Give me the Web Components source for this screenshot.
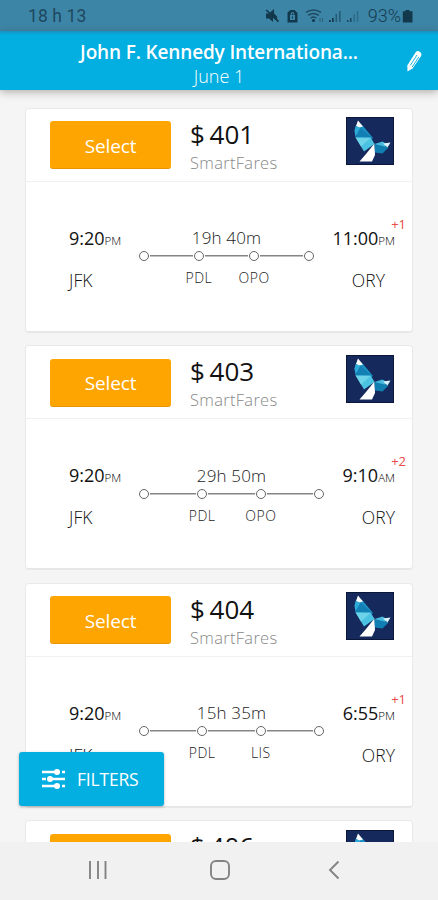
<!DOCTYPE html>
<html lang="en">
<head>
<meta charset="utf-8">
<title>Flights</title>
<style>
html,body{margin:0;height:100%;overflow:hidden;background:#f5f5f5}
body{font-family:"Open Sans","Noto Sans",sans-serif;color:#222}
</style>
</head>
<body>
<flight-app></flight-app>
<script>
const define = (name, html, setup) => {
  const t = document.createElement('template');
  t.innerHTML = html;
  customElements.define(name, class extends HTMLElement {
    connectedCallback() {
      if (this.shadowRoot) return;
      const root = this.attachShadow({mode: 'open'});
      root.append(t.content.cloneNode(true));
      if (setup) setup(this, root);
    }
  });
};

define('status-bar', `
<style>
:host{display:flex;align-items:center;height:31px;box-sizing:border-box;padding:1px 25px 0 28px;background:#3d85a6;color:#1d4860;font:400 17.5px/30px Roboto,sans-serif}
.time{flex:1;letter-spacing:.1px}
svg{display:block;flex:none}
.pct{margin-left:5px;font-size:18px;font-weight:300;color:#143c52}
</style>
<span class="time">18 h 13</span>
<svg width="98" height="20" viewBox="0 0 98 20" fill="#12384c">
  <path d="M1 7.5h3L9 3v4.2l3.2 3.5V15L8 11.6V16L4 12.5H1z"/>
  <path d="M1.2 4l12.3 11.6" stroke="#12384c" stroke-width="1.7"/>
  <path fill-rule="evenodd" d="M25.5 4h4l3 3v9.5h-10V6.500zM25 9v5h5V9h-.7V7.8a1.8 1.8 0 0 0-3.6 0V9zm1.800 0V8a.8.8 0 0 1 1.600 0v1zM27 10.500h1v2h-1z"/>
  <g fill="none" stroke="#1d4a60" stroke-width="1.5"><path d="M41 6.400q7.500-5 15 0M43.200 9.400q5.300-4 10.600 0M45.700 12.200q2.800-2.400 5.600 0"/></g>
  <circle cx="48.500" cy="14.500" r="1.500"/>
  <path d="M55 12v4M57.500 12v4" stroke="#2a5a70" stroke-width=".9"/>
  <path d="M64 14h1.700v2H64zm3-2h1.700v4H67z"/>
  <path opacity=".55" d="M70.500 8h1.600v8h-1.600zm3.500-3h1.600v11H74z"/>
  <path opacity=".85" d="M82 14h1.500v2H82zm3-2h1.500v4H85z"/>
  <path opacity=".35" d="M88.500 8H90v8h-1.500zm3.300-3h1.500v11h-1.500z"/>
</svg>
<span class="pct">93%</span>
<svg width="11" height="16" viewBox="0 0 11 16" style="margin-left:1px"><path fill="#12384c" d="M3.500 2h4v1.200H10.500V14.500H.8V3.200h2.700z"/></svg>
`);

define('trip-header', `
<style>
:host{display:block;position:relative;z-index:2;height:59px;background:#03aee0;color:#fff;text-align:center;box-shadow:0 2px 8px rgba(70,50,50,.38);background-image:linear-gradient(rgba(50,110,150,.45),transparent 4px)}
h1{margin:0;padding-top:7.500px;font-size:19px;line-height:26px;font-weight:600;letter-spacing:-.15px}
p{margin:0;font-size:18px;line-height:24px;font-weight:300;margin-top:-1px}
svg{position:absolute;right:15px;top:19px}
</style>
<h1>John F. Kennedy Internationa...</h1>
<p>June 1</p>
<svg width="18" height="23" viewBox="0 0 18 23"><path fill="#fff" d="M10.500 2.500Q12.500 0 15 2 17.500 4 15.800 6.500L7.500 18.500 2.500 21.500 2.300 15.500z"/><path d="M5.200 15.500L12 5M7.200 17L13.800 7" stroke="#03aee0" stroke-width=".9"/></svg>
`);

define('fare-logo', `
<style>:host{display:block;width:48px;height:48px}svg{display:block}</style>
<svg width="48" height="48" viewBox="0 0 48 48">
  <rect x=".5" y=".5" width="47" height="47" fill="#15295c" stroke="#0b1738"/>
  <path fill="#1d93c6" d="M12 5l5 4 10 12-10 4-8.500-11z"/>
  <path fill="#fff" d="M12 3.500L17 9.500l-3.500 1L10 9z"/>
  <path fill="#2eaad8" d="M9.500 9l5 2L9.500 20 8.500 14z"/>
  <path fill="#127fb5" d="M14.500 10.500L27 21.500 9.500 20z"/>
  <path fill="#4bc2e2" d="M9.300 20L25 21 28.500 27 18 34.500z"/>
  <path fill="#6dd3e8" d="M10 21l15-.5-10 9z"/>
  <path fill="#fff" d="M28.500 26.500L29 38 26 44.500H13.500L20 37z"/>
  <path fill="#46b9dd" d="M28.500 27l8-2.500 5 3-4 4z"/>
  <path fill="#117eb2" d="M28.500 27l14 3.500-6 6-7.500-1z"/>
  <path fill="#d8f3fa" d="M37 26.500l7.500-1-3 5z"/>
</svg>
`);

define('route-track', `
<style>
:host{display:block}
.dur{text-align:center;font-size:17px;line-height:24px;font-weight:300;color:#222;letter-spacing:.15px;margin-top:-.500px}
.line{display:flex;justify-content:space-between;margin-top:1px;background:linear-gradient(#858585,#858585) center 4px/calc(100% - 8px) 1.500px no-repeat}
.stop{display:flex;flex-direction:column;align-items:center;width:10px}
i{box-sizing:border-box;width:10px;height:10px;border:1.500px solid #666;border-radius:50%;background:#fff;box-shadow:0 0 0 1px #fff}
span{white-space:nowrap;font-size:14px;line-height:20px;margin-top:7px;font-weight:300;color:#222;letter-spacing:.5px}
</style>
<div class="dur"></div><div class="line"></div>
`, (el, root) => {
  root.querySelector('.dur').textContent = el.getAttribute('duration');
  const line = root.querySelector('.line');
  for (const code of ['', ...el.getAttribute('stops').split(','), '']) {
    const s = document.createElement('div');
    s.className = 'stop';
    s.append(document.createElement('i'));
    if (code) { const n = document.createElement('span'); n.textContent = code; s.append(n); }
    line.append(s);
  }
});

define('flight-time', `
<style>
:host{display:block;position:relative;white-space:nowrap}
.t{font-size:18px;line-height:24px;color:#111;margin-top:-1px}
small{font-size:11.500px;font-weight:300;color:#000}
.code{margin-top:15px;font-size:17.500px;line-height:24px;font-weight:300;color:#111;letter-spacing:.1px}
sup{position:absolute;right:-11px;top:-12px;font-size:13px;line-height:18px;color:#e84a46}
</style>
<div class="t"><slot></slot><small></small></div><div class="code"></div><sup></sup>
`, (el, root) => {
  root.querySelector('small').textContent = el.getAttribute('half');
  root.querySelector('.code').textContent = el.getAttribute('code');
  const day = el.getAttribute('day'), sup = root.querySelector('sup');
  if (day) sup.textContent = day; else sup.remove();
});

define('select-button', `
<style>
:host{display:flex;align-items:center;justify-content:center;width:121px;height:48px;box-sizing:border-box;border-radius:3px;background:#ffa502;color:#fff;font-size:19px;border-bottom:1px solid #e89400;letter-spacing:-.15px;padding-top:2px}
</style><slot></slot>
`);

define('flight-card', `
<style>
:host{display:block;box-sizing:border-box;width:388px;height:225px;border:1px solid #e9e9e9;border-bottom:2px solid #e7e7e7;border-radius:4px;background:#fff;flex:none}
header{display:flex;align-items:flex-start;height:73px;box-sizing:border-box;padding:12.500px 18px 0 24px;border-bottom:1px solid #f1f1f1}
.price{flex:1;padding-left:19px}
.amt{font-size:26px;line-height:32px;color:#111;margin-top:-3.500px;word-spacing:-2px}
.by{font-size:16.500px;line-height:22px;font-weight:300;color:#888;margin-top:2px;letter-spacing:.3px}
fare-logo{margin-top:-4px}
.body{display:flex;padding:45px 17px 0 43px}
.from{width:69.500px}
.to{flex:1;display:flex;justify-content:flex-end;text-align:right}
</style>
<header><select-button>Select</select-button><div class="price"><div class="amt"></div><div class="by">SmartFares</div></div><fare-logo></fare-logo></header>
<div class="body"></div>
`, (el, root) => {
  const a = n => el.getAttribute(n);
  root.querySelector('.amt').textContent = '$ ' + a('price');
  root.querySelector('.body').innerHTML =
    `<flight-time class="from" half="PM" code="JFK">9:20</flight-time>
     <route-track duration="${a('duration')}" stops="${a('stops')}" style="width:${a('track')}px"></route-track>
     <div class="to"><flight-time half="${a('half')}" code="ORY" day="${a('day')}">${a('arrive')}</flight-time></div>`;
  if (a('arrive').length > 4)
    root.querySelector('.to flight-time').shadowRoot.querySelector('.code').style.paddingRight = '10px';
});

define('filter-button', `
<style>
:host{display:flex;align-items:center;gap:12px;box-sizing:border-box;width:145px;height:54px;padding-left:23px;border-radius:3px;background:#03aee0;color:#fff;font-size:17.500px;box-shadow:0 1px 3px rgba(0,0,0,.3);letter-spacing:-.2px}
svg{flex:none}
</style>
<svg width="23" height="20" viewBox="0 0 23 20" stroke="#fff" stroke-width="2.600" fill="#fff"><path d="M0 3H18M20 3h3M0 10H4M6 10H23M0 17H18M20 17h3"/><g stroke="none"><circle cx="15" cy="3" r="3"/><circle cx="8" cy="10" r="3"/><circle cx="15" cy="17" r="3"/></g></svg>
<span><slot></slot></span>
`);

define('nav-bar', `
<style>
:host{display:flex;align-items:center;height:58px;box-sizing:border-box;padding:0 0 2px 88px;background:#f1f1f1}
svg{display:block}
</style>
<svg width="20" height="20" fill="none" stroke="#838383" stroke-width="1.900"><path d="M2 1v18M10 1v18M17.500 1v18"/></svg>
<svg width="20" height="20" fill="none" stroke="#838383" stroke-width="1.900" style="margin:0 99px 0 102px"><rect x="1" y="1" width="18" height="18" rx="5"/></svg>
<svg width="12" height="20" fill="none" stroke="#838383" stroke-width="1.900" style="margin-left:-1px"><path d="M10.500 1.500L2 10l8.500 8.500"/></svg>
`);

define('flight-app', `
<style>
:host{display:flex;flex-direction:column;position:relative;width:438px;height:900px;overflow:hidden}
main{flex:1;min-height:0;overflow:hidden;display:flex;flex-direction:column;gap:12.500px;padding:17.500px 0 0 25px;background:#f5f5f5}
filter-button{position:absolute;left:19px;top:752px}
</style>
<status-bar></status-bar>
<trip-header></trip-header>
<main>
<flight-card price="401" duration="19h 40m" stops="PDL,OPO" track="176" arrive="11:00" half="PM" day="+1"></flight-card>
<flight-card price="403" duration="29h 50m" stops="PDL,OPO" track="186" arrive="9:10" half="AM" day="+2"></flight-card>
<flight-card price="404" duration="15h 35m" stops="PDL,LIS" track="186" arrive="6:55" half="PM" day="+1"></flight-card>
<flight-card price="406" duration="15h 35m" stops="PDL,LIS" track="186" arrive="6:55" half="PM" day="+1"></flight-card>
</main>
<filter-button>FILTERS</filter-button>
<nav-bar></nav-bar>
`);
</script>
</body>
</html>
